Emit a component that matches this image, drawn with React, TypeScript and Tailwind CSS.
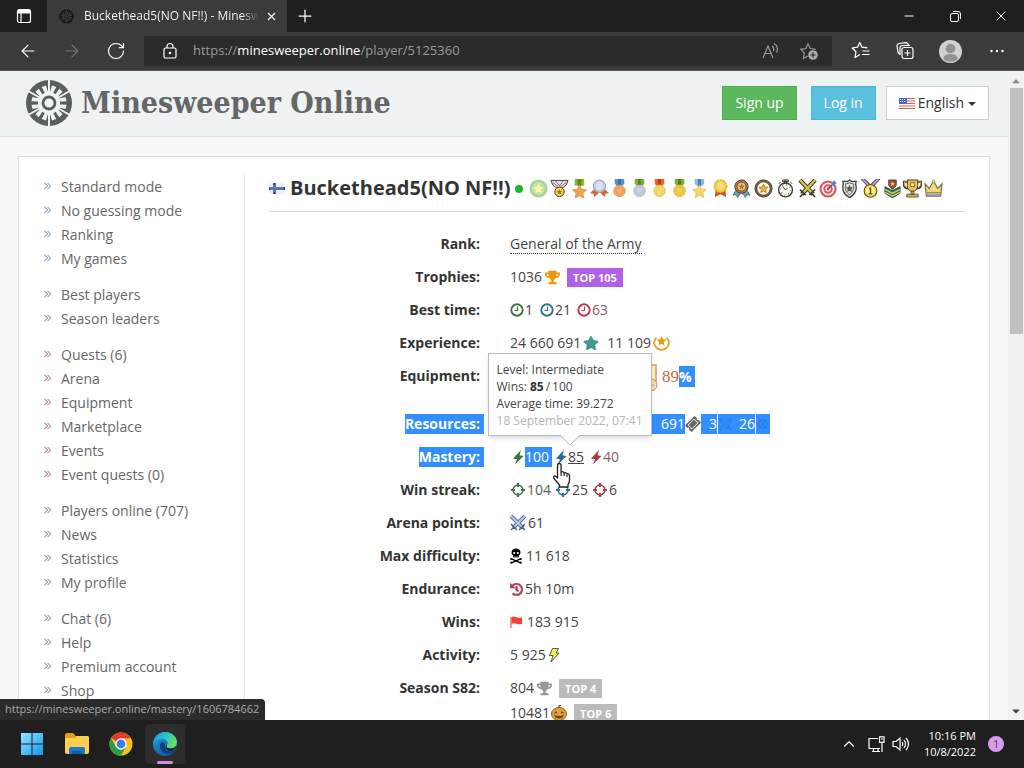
import type { ReactNode } from "react";
import { ArrowLeft, ArrowRight, RotateCw, Plus, X, Minus, ChevronUp, Swords } from "lucide-react";
import { FaTrophy, FaStar, FaHistory, FaTicketAlt, FaCaretDown, FaCaretUp } from "react-icons/fa";

const STAR = "M10 3l2.1 4.6 5 .6-3.7 3.4 1 5L10 14.1l-4.4 2.5 1-5L2.9 8.2l5-.6z";

function Logo({ size, color, hole }: { size: number; color: string; hole: string }) {
  const angles = [0, 60, 120, 180, 240, 300];
  return (
    <svg width={size} height={size} viewBox="-24 -24 48 48" aria-hidden="true">
      <circle r="23" fill={color} />
      <circle r="11.5" fill={hole} />
      {angles.map((a) => (
        <g key={a} transform={`rotate(${a})`}>
          <path d="M-1 -24h2v14h-2z" fill={hole} />
          <path d="M-2.200 -17.500h4.400v8h-4.400z" fill={hole} transform="rotate(17)" />
          <path d="M-2.200 -17.500h4.400v8h-4.400z" fill={hole} transform="rotate(43)" />
          <path d="M-1.500 -17h3v6h-3z" fill={color} transform="rotate(30)" />
        </g>
      ))}
      <circle r="6" fill="none" stroke={color} strokeWidth="2.800" />
    </svg>
  );
}

function Medal({ ribbon, dark, disc, rim }: { ribbon: string; dark: string; disc: string; rim: string }) {
  return (
    <>
      <path d="M5 0h10v5l-2 2H7L5 5z" fill={ribbon} />
      <path d="M8.5 0h3v6h-3z" fill={dark} />
      <circle cx="10" cy="12.5" r="6" fill={disc} stroke={rim} />
      <circle cx="10" cy="12.5" r="3.8" fill="none" stroke={rim} strokeWidth=".7" />
    </>
  );
}

const O = "#3f3830";
const awards: { name: string; cls: string; art: ReactNode }[] = [
  { name: "Veteran", cls: "w-[21px]", art: <><circle cx="10" cy="10" r="9.500" fill="#a9d3a0" /><circle cx="10" cy="10" r="6.800" fill="#c9e2a5" /><path d={STAR} fill="#fbf7b0" transform="translate(2.400 2.400) scale(.76)" /></> },
  { name: "Honour", cls: "w-[21px]", art: <><path d="M1 1.500h18l-2 5-4 3H7L3 6.500z" fill="#e8e8e8" stroke={O} /><path d="M3 3.500l6 5M17 3.500l-6 5M6 2l4 5 4-5" stroke="#7b5670" fill="none" /><circle cx="10" cy="13.500" r="5" fill="#f5cf52" stroke={O} /><path d={STAR} fill="#a06a20" transform="translate(6 9.500) scale(.4)" /></> },
  { name: "Bronze star", cls: "w-5", art: <><path d="M5 0h10v7H5z" fill="#8cb52e" /><path d="M8 0h4v7H8z" fill="#5c8913" /><path d={STAR} fill="#f0a154" stroke="#d98336" strokeWidth=".7" transform="translate(-.5 2.800) scale(1.050)" /></> },
  { name: "Silver rosette", cls: "w-5", art: <><path d="M5 10l-5 5 3.500 .500 1 3.500 5.500-5 5.500 5 1-3.500 3.500-.500-5-5z" fill="#df6538" /><circle cx="10" cy="7.500" r="6.500" fill="#c1cedd" stroke="#91a3b8" /><circle cx="10" cy="7.500" r="4" fill="#d9e3ed" /></> },
  { name: "Bronze medal", cls: "w-5", art: <Medal ribbon="#4f94cb" dark="#31719f" disc="#f2ad6b" rim="#df9048" /> },
  { name: "Silver medal", cls: "w-5", art: <Medal ribbon="#7dad2f" dark="#57851b" disc="#cbd3e4" rim="#a4b0c8" /> },
  { name: "Gold medal red", cls: "w-5", art: <Medal ribbon="#e76132" dark="#c03810" disc="#f8dc72" rim="#e8bd45" /> },
  { name: "Gold medal green", cls: "w-5", art: <Medal ribbon="#7dad2f" dark="#4f7d16" disc="#f5cd55" rim="#dfab35" /> },
  { name: "Gold star", cls: "w-5", art: <><path d="M5 0h10v5l-3 3H8L5 5z" fill="#8bb9de" /><path d="M8.500 0h3v7h-3z" fill="#3e7eb4" /><path d={STAR} fill="#f8d570" stroke="#dfae42" strokeWidth=".7" transform="translate(0 3)" /></> },
  { name: "Gold rosette", cls: "w-[21px]", art: <><path d="M5 11l-1 8 6-3 6 3-1-8z" fill="#d74b22" /><circle cx="10" cy="7.500" r="6.600" fill="#f4c942" stroke="#e8b52f" strokeWidth="1.500" strokeDasharray="2 1" /><circle cx="10" cy="7.500" r="4" fill="#fae17d" /></> },
  { name: "Ribbon", cls: "w-[22px]", art: <><path d="M4 12l-3 5 3-.500 2 3 4-6 4 6 2-3 3 .500-3-5z" fill="#67a2b5" stroke={O} strokeWidth=".6" /><circle cx="10" cy="8" r="7" fill="#b17c45" stroke={O} /><circle cx="10" cy="8" r="4.700" fill="#e8c26c" stroke={O} strokeWidth=".7" /><path d={STAR} fill="#b0752b" transform="translate(5.500 3.500) scale(.45)" /></> },
  { name: "Star badge", cls: "w-[22px]", art: <><circle cx="10" cy="10" r="9" fill="#8b6048" stroke={O} /><circle cx="10" cy="10" r="7" fill="#fff8e0" stroke={O} strokeWidth=".8" /><path d={STAR} fill="#f2b32d" stroke="#805619" transform="translate(3.500 3.500) scale(.65)" /></> },
  { name: "Stopwatch", cls: "w-[22px]", art: <><path d="M7 1h6v2H7zM9 2h2v3H9zM3 5l2-2M17 5l-2-2" fill="#d9cd72" stroke={O} /><circle cx="10" cy="11.500" r="7.300" fill="#f4f4e8" stroke={O} strokeWidth="1.400" /><circle cx="10" cy="11.500" r="5.300" fill="none" stroke="#777" strokeWidth="1.300" strokeDasharray="1 3.160" /><path d="M7 8l3 3.500 2-2" stroke={O} fill="none" /></> },
  { name: "Swords", cls: "w-[21px]", art: <><path d="M2 1l14 15M18 1L4 16" stroke={O} strokeWidth="4.500" /><path d="M2 1l14 15M18 1L4 16" stroke="#d5c940" strokeWidth="2.500" /><path d="M2 11l6 6M18 11l-6 6M2 19l4-4M18 19l-4-4" stroke={O} strokeWidth="1.700" /></> },
  { name: "Target", cls: "w-[21px]", art: <><circle cx="9.500" cy="10.500" r="9" fill="#df5258" /><circle cx="9.500" cy="10.500" r="6.800" fill="#fff0ec" /><circle cx="9.500" cy="10.500" r="4.900" fill="#df5258" /><circle cx="9.500" cy="10.500" r="2.900" fill="#fff0ec" /><circle cx="9.500" cy="10.500" r="1.500" fill="#c6413c" /><path d="M10 10l7-7" stroke="#365d91" strokeWidth="1.500" /><path d="M13 5l3-4 .700 2.500L19 4l-4 3.500z" fill="#4b88c7" /></> },
  { name: "Shield", cls: "w-[21px]", art: <><path d="M10 1l2 1.500h5l-.500 3c1.500 5 0 11-6.500 14C3.500 16.500 2 10.500 3.500 5.500L3 2.500h5z" fill="#e2e3df" stroke={O} strokeWidth="1.300" /><path d="M10 4c-2 1-4 1-4 1-1 5 0 9 4 11.500C14 14 15 10 14 5c0 0-2 0-4-1z" fill="none" stroke={O} strokeWidth=".8" /><path d={STAR} fill="#555" transform="translate(4.500 4.500) scale(.55)" /></> },
  { name: "First place", cls: "w-[22px]", art: <><path d="M0 0h4l6 6 6-6h4l-7 8H7z" fill="#8b6fa1" stroke="#5c3b43" strokeWidth=".8" /><path d="M2 0l6 7M18 0l-6 7" stroke="#e0d7df" /><circle cx="10" cy="12.500" r="6.700" fill="#efd842" stroke="#5e5422" strokeWidth="1.200" /><circle cx="10" cy="12.500" r="4.700" fill="#fff39b" /><path d="M8.500 10.500l1.500-1v6M8 15.500h4" stroke="#65501c" strokeWidth="1.500" fill="none" /></> },
  { name: "Rank insignia", cls: "w-[21px]", art: <><path d="M2 8l8 4 8-4v7l-8 5-8-5z" fill="#2f7655" stroke="#24473a" strokeWidth=".8" /><path d="M2 11l8 4 8-4M2 14l8 4 8-4" stroke="#e0d46a" fill="none" strokeWidth="1.200" /><path d="M6 1h8v6l-4 4-4-4z" fill="#9c4f3c" stroke={O} strokeWidth=".8" /><path d={STAR} fill="#edc85c" transform="translate(6.500 1.500) scale(.35)" /></> },
  { name: "Cup", cls: "w-5", art: <><path d="M5 3H1v3c0 3 2 4 5 4M15 3h4v3c0 3-2 4-5 4" fill="none" stroke={O} strokeWidth="2.200" /><path d="M5 3H1.500v3c0 2 2 3 4 3M15 3h3.500v3c0 2-2 3-4 3" fill="none" stroke="#dfb342" /><path d="M4.500 1h11v6c0 4-2.500 6-5.500 6s-5.500-2-5.500-6z" fill="#edc253" stroke={O} /><path d="M8.500 13h3v3h-3zM4 16h12v3H4z" fill="#d9b54c" stroke={O} strokeWidth=".8" /><rect x="8" y="4" width="4" height="4" fill="#fff3a2" stroke="#8f6123" /></> },
  { name: "Crown", cls: "w-[22px]", art: <><path d="M1 5l4.500 5L10 2l4.500 8L19 5l-1.500 13h-15z" fill="#ecd877" stroke="#776d48" strokeWidth="1.200" /><path d="M3 14.500h14" stroke="#776d48" /><path d="M3 17h14" stroke="#9098c0" strokeWidth="2" /><circle cx="10" cy="2.500" r="1.500" fill="#fff2b0" stroke="#776d48" strokeWidth=".7" /></> },
];

const menu: { color: string; items: string[] }[] = [
  { color: "text-[#4a76a8]", items: ["Standard mode", "No guessing mode", "Ranking", "My games"] },
  { color: "text-[#666666]", items: ["Best players", "Season leaders"] },
  { color: "text-[#a05252]", items: ["Quests (6)", "Arena", "Equipment", "Marketplace", "Events", "Event quests (0)"] },
  { color: "text-[#666666]", items: ["Players online (707)", "News", "Statistics", "My profile"] },
  { color: "text-[#666666]", items: ["Chat (6)", "Help", "Premium account", "Shop"] },
];

function Clock({ color }: { color: string }) {
  return (
    <svg width="14" height="14" viewBox="0 0 14 14" fill="none" stroke={color} aria-hidden="true">
      <circle cx="7" cy="7" r="5.700" strokeWidth="1.900" />
      <path d="M7.500 3.500V7.500H4.500" strokeWidth="1.200" />
    </svg>
  );
}

function Bolt({ className }: { className: string }) {
  return (
    <svg className={className} width="12" height="16" viewBox="0 0 12 16" aria-hidden="true">
      <path d="M9 1L1 9.500l4 .800L3 15.500l8.500-8.500-4-.800z" />
    </svg>
  );
}

function Crosshair({ color }: { color: string }) {
  return (
    <svg width="16" height="16" viewBox="0 0 16 16" fill="none" stroke={color} aria-hidden="true">
      <circle cx="8" cy="8" r="5" strokeWidth="1.500" />
      <path d="M8 1v4M8 11v4M1 8h4M11 8h4" strokeWidth="2.200" />
    </svg>
  );
}

function Skull() {
  return (
    <svg className="mr-1" width="12" height="16" viewBox="0 0 12 16" aria-hidden="true">
      <path d="M6 .5c3 0 4.500 1.800 4.500 4 0 1.500-.8 2.300-1.700 3v2H3.200v-2c-.9-.7-1.700-1.500-1.700-3 0-2.200 1.500-4 4.500-4z" />
      <circle cx="4.200" cy="5" r="1.100" fill="#fff" /><circle cx="7.800" cy="5" r="1.100" fill="#fff" />
      <path d="M5 8v1.500M7 8v1.500" stroke="#fff" strokeWidth=".6" />
      <path d="M1.500 10.800l9 4M10.500 10.800l-9 4" stroke="#000" strokeWidth="1.300" />
      <circle cx="1.300" cy="11" r="1.100" /><circle cx="10.700" cy="11" r="1.100" /><circle cx="1.300" cy="14.700" r="1.100" /><circle cx="10.700" cy="14.700" r="1.100" />
    </svg>
  );
}

function Row({ label, children, selected, tall }: { label: string; children: ReactNode; selected?: boolean; tall?: boolean }) {
  return (
    <div className={tall ? "flex h-12 items-start" : "flex h-[33px] items-start"}>
      <dt className="flex w-[215px] shrink-0 justify-end font-bold">
        <span className={selected ? "bg-[#338fff] pr-1 leading-5 text-white" : "pr-1 leading-5"}>{label}</span>
      </dt>
      <dd className="ml-[26px] flex h-5 items-center whitespace-nowrap leading-5 text-[#444]">{children}</dd>
    </div>
  );
}

function Flag({ className }: { className: string }) {
  return (
    <svg className={className} viewBox="0 0 16 11" aria-hidden="true">
      <path fill="#fff" d="M0 0h16v11H0z" />
      <path stroke="#dd5a58" d="M0 .5h16M0 3h16M0 5.500h16M0 8h16M0 10.500h16" />
      <path fill="#4967bd" d="M0 0h8v6H0z" />
      <path stroke="#dbe3ff" strokeDasharray="1 1" d="M1 1.500h6M1 3.500h6" />
    </svg>
  );
}

function Browser() {
  return (
    <header className="shrink-0 bg-[#1f1f1f] text-white">
      <div className="flex h-8 items-center">
        <button aria-label="Tab actions" className="flex h-8 w-[47px] items-center justify-center">
          <svg width="16" height="16" viewBox="0 0 16 16" fill="none" stroke="#fff" strokeWidth="1.200">
            <rect x="1.500" y="1.500" width="13" height="13" rx="2" />
            <path d="M2 3h12M2 4.500h12" strokeWidth="1.800" /><path d="M5 5v9" />
          </svg>
        </button>
        <div className="flex h-8 w-[240px] items-center bg-[#3b3b3b] pl-3 pr-2">
          <Logo size={15} color="#151515" hole="#3b3b3b" />
          <span className="ml-[10px] flex-1 overflow-hidden whitespace-nowrap bg-gradient-to-r from-white from-90% to-[#3b3b3b] bg-clip-text text-[12px] text-transparent">Buckethead5(NO NF!!) - Minesweeper</span>
          <button aria-label="Close tab" className="ml-1 flex size-4 items-center justify-center"><X size={13} strokeWidth={2} /></button>
        </div>
        <button aria-label="New tab" className="ml-2 flex size-5 items-center justify-center"><Plus size={20} strokeWidth={1.500} /></button>
        <div className="ml-auto flex">
          <button aria-label="Minimize" className="flex h-8 w-[46px] items-center justify-center"><Minus size={14} strokeWidth={1.700} /></button>
          <button aria-label="Restore" className="flex h-8 w-[46px] items-center justify-center">
            <svg width="11" height="11" viewBox="0 0 11 11" fill="none" stroke="#fff"><rect x=".5" y="2.500" width="8" height="8" rx="1.500" /><path d="M3 .5h5a2.500 2.500 0 012.500 2.500v5" /></svg>
          </button>
          <button aria-label="Close" className="flex h-8 w-[46px] items-center justify-center"><X size={16} strokeWidth={1.500} /></button>
        </div>
      </div>
      <div className="flex h-[39px] items-center border-b border-[#555] bg-[#3b3b3b]">
        <button aria-label="Back" className="ml-[18px]"><ArrowLeft size={20} strokeWidth={1.400} /></button>
        <button aria-label="Forward" className="ml-6 text-[#777]"><ArrowRight size={20} strokeWidth={1.400} /></button>
        <button aria-label="Refresh" className="ml-6"><RotateCw size={20} strokeWidth={1.400} /></button>
        <div className="ml-[18px] flex h-[30px] flex-1 items-center bg-[#2b2b2b] pl-[18px] pr-[14px]">
          <svg width="16" height="18" viewBox="0 0 16 18" fill="none" stroke="#fff" strokeWidth="1.200" aria-hidden="true">
            <rect x="2" y="6" width="12" height="10" rx="1.500" /><path d="M5 6V4.500a3 3 0 016 0V6" /><circle cx="8" cy="11" r=".7" fill="#fff" />
          </svg>
          <span className="ml-[15px] text-[13px] text-[#9a9a9a]">https://<span className="text-white">minesweeper.online</span>/player/5125360</span>
          <div className="ml-auto flex items-center gap-5">
            <button aria-label="Read aloud">
              <svg width="18" height="18" viewBox="0 0 18 18" fill="none" stroke="#999" strokeWidth="1.200"><path d="M1 16L6 4l5 12M3 11.500h6M10 4c1.500 1 2 3 1.500 5M12 1.500c3.500 2 4 5.500 2.500 9" /></svg>
            </button>
            <button aria-label="Add to favourites">
              <svg width="18" height="18" viewBox="0 0 18 18" fill="none" stroke="#999" strokeWidth="1.200"><path d="M8 14l-4.500 2.500.800-5.500L.8 7.300l5-.800L8 2l2.300 4.500 5.200.8" /><circle cx="13" cy="13" r="4.800" fill="#aaa" stroke="none" /><path d="M10.500 13h5M13 10.500v5" stroke="#292929" /></svg>
            </button>
          </div>
        </div>
        <div className="flex items-center pl-[19px] pr-5">
          <button aria-label="Favourites"><svg width="20" height="20" viewBox="0 0 20 20" fill="none" stroke="#fff" strokeWidth="1.200" strokeLinejoin="round"><path d="M9 13.500L4 16.500l1-5.800L1.200 7l5.300-.8L8.800 1.500 11 6.200l5.500.6M11.500 10h7M11 13.500h7.500" /></svg></button>
          <button aria-label="Collections" className="ml-6"><svg width="20" height="20" viewBox="0 0 20 20" fill="none" stroke="#fff" strokeWidth="1.200"><rect x="7" y="6.500" width="11" height="11" rx="2" /><path d="M12.500 9v6M9.500 12h6M5 13.500L3 11.500 2 5q0-2 2-2.500l7-.800q2 0 2.500 2.300M5 14V7q0-2.500 2.500-2.500H15" /></svg></button>
          <button aria-label="Profile" className="ml-6"><svg width="23" height="23" viewBox="0 0 24 24"><circle cx="12" cy="12" r="12" fill="#d3d1cf" /><circle cx="12" cy="9" r="5" fill="#96928f" /><path d="M4.500 20q0-5.500 7.500-5.500t7.500 5.500A12 12 0 014.500 20z" fill="#96928f" /></svg></button>
          <button aria-label="Settings and more" className="ml-7"><svg width="14" height="4" viewBox="0 0 14 4" fill="#fff"><circle cx="1.500" cy="2" r="1.200" /><circle cx="7" cy="2" r="1.200" /><circle cx="12.500" cy="2" r="1.200" /></svg></button>
        </div>
      </div>
    </header>
  );
}

function Tooltip() {
  return (
    <div role="tooltip" className="absolute bottom-[31px] left-1/2 z-10 h-[83px] w-[164px] -translate-x-1/2 border border-[#bbb] bg-white px-2 py-[7px] text-[12px] leading-[17px] text-[#444] shadow-md">
      <div>Level: Intermediate</div>
      <div>Wins: <b className="text-[#333]">85</b>&thinsp;/&thinsp;100</div>
      <div>Average time: 39.272</div>
      <div className="text-[#b5b5b5]">18 September 2022, 07:41</div>
      <svg className="absolute left-[71px] top-full" width="20" height="11" viewBox="0 0 20 11" aria-hidden="true"><path d="M0 0l10 10L20 0" fill="#fff" stroke="#bbb" /><path d="M1 0h18" stroke="#fff" strokeWidth="2" /></svg>
    </div>
  );
}

function Cursor() {
  return (
    <svg className="absolute -left-1 top-[14px] z-20" width="22" height="28" viewBox="0 0 22 28" aria-hidden="true">
      <path d="M6.500 16V4.500q0-2 1.800-2t1.800 2V11q2-1 3 .800 2-.8 2.800 1 2.100-.5 2.600 1.700v5q0 2-1.500 4v2.500H8.500V24L3 17.500q-1-1.800.5-2.500 1-.3 3 2z" fill="#fff" stroke="#222" strokeWidth="1.300" strokeLinejoin="round" />
      <path d="M10.100 11v4M13.100 12v3M16 13.500v2.500" stroke="#222" strokeWidth="1.200" />
    </svg>
  );
}

const badge = "px-[6px] text-[11px] leading-[19px] font-bold text-white";

function Profile() {
  return (
    <section className="min-w-0 flex-1 px-6">
      <div className="flex h-9 items-start border-b border-[#ddd]">
        <h1 className="flex h-6 shrink-0 items-center whitespace-nowrap text-[20px] font-bold">
          <svg className="mr-[5px]" width="16" height="11" viewBox="0 0 16 11" aria-label="Finland"><path d="M0 0h16v11H0z" fill="#edf0f7" /><path d="M0 5.500h16M5.500 0v11" stroke="#5c73c4" strokeWidth="3" /><path d="M0 4v3M5.500 0v2M5.500 9v2M15.500 4v3" stroke="#252c4d" /></svg>
          Buckethead5(NO NF!!)
        </h1>
        <span className="ml-1 mr-[5px] mt-[9px] size-2 shrink-0 rounded-full bg-[#1fb52a]" title="Online" />
        <ul className="flex h-6 shrink-0 items-center">
          {awards.map((a) => (
            <li key={a.name} className={`${a.cls} flex shrink-0 justify-center`}>
              <svg width="19" height="19" viewBox="0 0 20 20" role="img" aria-label={a.name}>{a.art}</svg>
            </li>
          ))}
        </ul>
      </div>
      <dl className="mt-[22px]">
        <Row label="Rank:"><a href="#rank" className="border-b border-dotted border-[#333] leading-[18px]">General of the Army</a></Row>
        <Row label="Trophies:">1036<FaTrophy size={15} className="ml-[3px] mr-[7px] text-[#ed980b]" /><span className={`${badge} bg-[#b160e8]`}>TOP 105</span></Row>
        <Row label="Best time:">
          <Clock color="#3c763d" /><span className="ml-[1px] mr-[7px]">1</span>
          <Clock color="#31708f" /><span className="ml-[1px] mr-[6px]">21</span>
          <Clock color="#b24052" /><span className="ml-[1px] text-[#855c64]">63</span>
        </Row>
        <Row label="Experience:">
          24 660 691<FaStar size={16} className="ml-[2px] mr-2 text-[#46978c]" />11 109
          <svg className="ml-[2px]" width="17" height="17" viewBox="0 0 20 20" aria-hidden="true"><path d="M4 3q-6 7 1 13M16 3q6 7-1 13M5 16q5 3 10 0" fill="none" stroke="#dfa52f" strokeWidth="2.200" /><path d={STAR} fill="#e6990d" transform="translate(2 -1) scale(.8)" /></svg>
        </Row>
        <Row label="Equipment:" tall>
          <svg className="ml-[134px] mt-[6px] h-[30px] w-[15px] shrink-0" viewBox="0 0 15 30" aria-hidden="true"><path d="M4 1h8v16H4z" fill="#fff0d8" stroke="#df9c54" strokeWidth="1.500" /><circle cx="7" cy="21" r="6" fill="#f8dcb5" stroke="#ce8855" /><path d="M7 18v6M4 21h6" stroke="#d49551" /></svg>
          <span className="ml-[3px] mt-[2px] font-['Liberation_Serif',serif] text-[17px] text-[#ca6736]">89</span>
          <span className="bg-[#338fff] pr-[3px] font-bold leading-[21px] text-white">%</span>
        </Row>
        <Row label="Resources:" selected>
          <span className="ml-[138px] bg-[#338fff] pl-[13px] leading-5 text-white">691</span>
          <FaTicketAlt size={14} className="mx-[1px] -rotate-45 text-[#666]" />
          <span className="bg-[#338fff] pl-2 leading-5 text-white">3</span>
          <span className="ml-[1px] flex h-5 items-center bg-[#338fff] text-white">
            <Swords size={15} className="text-[#2b80e6]" /><span className="ml-[6px]">26</span>
          </span>
          <span className="ml-[1px] flex h-5 w-[14px] items-center justify-center bg-[#338fff]"><svg width="12" height="12" viewBox="0 0 12 12" fill="none" stroke="#2b80e6" strokeWidth="1.500" aria-hidden="true"><circle cx="6" cy="6" r="4" /><path d="M2 2l8 8M10 2l-8 8" /></svg></span>
        </Row>
        <Row label="Mastery:" selected>
          <Bolt className="ml-[2px] mr-[1px] fill-[#3c763d]" />
          <span className="bg-[#338fff] pr-[3px] leading-5 text-white">100</span>
          <a href="#mastery" className="relative ml-[3px] flex h-5 items-center">
            <Bolt className="mr-[1px] fill-[#256c8e]" /><span className="underline">85</span>
            <Tooltip />
            <Cursor />
          </a>
          <Bolt className="ml-[6px] mr-[1px] fill-[#ad373c]" /><span className="text-[#855c64]">40</span>
        </Row>
        <Row label="Win streak:">
          <Crosshair color="#48764a" /><span className="ml-[1px] mr-1 text-[#536253]">104</span>
          <Crosshair color="#31708f" /><span className="ml-[1px] mr-1">25</span>
          <Crosshair color="#a94442" /><span className="ml-[1px]">6</span>
        </Row>
        <Row label="Arena points:">
          <svg className="mr-[2px]" width="16" height="16" viewBox="0 0 16 16" aria-hidden="true"><path d="M1 1l12 12M15 1L3 13" stroke="#57709d" strokeWidth="4" /><path d="M1 1l12 12M15 1L3 13" stroke="#b4cae6" strokeWidth="1.800" /><path d="M1 9l6 6M15 9l-6 6M1 15l3-3M15 15l-3-3" stroke="#4c668c" strokeWidth="1.500" /></svg>61
        </Row>
        <Row label="Max difficulty:"><Skull />11 618</Row>
        <Row label="Endurance:"><FaHistory size={13} className="mr-[2px] fill-[#b13a50] stroke-[#b13a50] stroke-[24px]" />5h 10m</Row>
        <Row label="Wins:"><svg className="mr-1 mb-[1px]" width="13" height="12" viewBox="0 0 13 12" aria-hidden="true"><path d="M1 1v11" stroke="#c74840" /><path d="M1.500 1q2.500-1 5 .300t5.500 0v6.500q-3 1-5.500 0t-5 0z" fill="#f44336" /></svg>183 915</Row>
        <Row label="Activity:">5 925<svg className="ml-[2px]" width="12" height="16" viewBox="0 0 12 16" aria-hidden="true"><path d="M4.500 1.500h6L8 6h3L3 15l2-6.500H1.500z" fill="#f7ed4f" stroke="#555" /></svg></Row>
        <div className="flex">
          <dt className="w-[211px] text-right font-bold leading-5">Season S82:</dt>
          <dd className="ml-[30px] flex flex-col gap-[5px] leading-5 text-[#444]">
            <span className="flex h-5 items-center">804<FaTrophy size={15} className="ml-[3px] mr-[7px] text-[#999]" /><span className={`${badge} bg-[#bbb]`}>TOP 4</span></span>
            <span className="flex h-5 items-center">10481
              <svg className="ml-[1px] mr-[7px]" width="16" height="16" viewBox="0 0 16 16" aria-hidden="true"><ellipse cx="8" cy="9" rx="7.500" ry="6.500" fill="#e8a337" stroke="#7d5f2b" /><path d="M5 3q-3 6 0 12M11 3q3 6 0 12" stroke="#cb862a" fill="none" /><path d="M8 3V1l2-1" stroke="#64752d" strokeWidth="1.500" fill="none" /><path d="M3 7.500l3-1v2zM13 7.500l-3-1v2zM3 10q5 2 10 0-2 3.500-5 3.500T3 10z" fill="#65451d" /></svg>
              <span className={`${badge} bg-[#bbb]`}>TOP 6</span>
            </span>
          </dd>
        </div>
      </dl>
    </section>
  );
}

function Taskbar() {
  return (
    <footer className="flex h-12 shrink-0 items-center bg-[#1f1f1f] text-white">
      <button aria-label="Start" className="ml-5"><svg width="24" height="24" viewBox="0 0 24 24"><defs><linearGradient id="win" x2="1" y2="1"><stop stopColor="#8be9ff" /><stop offset="1" stopColor="#1697ed" /></linearGradient></defs><path fill="url(#win)" d="M1 1h10.500v10.500H1zM12.500 1H23v10.500H12.500zM1 12.500h10.500V23H1zM12.500 12.500H23V23H12.500z" /></svg></button>
      <button aria-label="File Explorer" className="ml-5"><svg width="26" height="24" viewBox="0 0 26 24"><path d="M1 3q0-2 2-2h6l3 3h11q2 0 2 2v14H1z" fill="#dda11b" /><path d="M1 6h10l2-2h10q2 0 2 2v14q0 2-2 2H3q-2 0-2-2z" fill="#fdd04f" /><path d="M5 22v-5q0-2 2-2h12q2 0 2 2v5z" fill="#1c78ca" /><path d="M8 19h10v3H8z" fill="#125b9e" /></svg></button>
      <button aria-label="Chrome" className="ml-[19px]"><svg width="24" height="24" viewBox="-12 -12 24 24"><circle r="11.500" fill="#fbc116" /><path d="M-9.960-5.750A11.500 11.500 0 019.960-5.750H0L-5-2.900z" fill="#e33b2e" /><path d="M-9.960-5.750A11.500 11.500 0 000 11.500L5 2.900 0 5.500-5 2.900z" fill="#2b9e4b" /><circle r="5.700" fill="#fff" /><circle r="4.400" fill="#3d7fe8" /></svg></button>
      <button aria-label="Edge" className="relative ml-3 flex size-10 items-center justify-center rounded bg-[#2d2d2d]">
        <svg width="24" height="24" viewBox="0 0 24 24"><defs><linearGradient id="edgeTop" x2="1" y2=".4"><stop stopColor="#1997dc" /><stop offset=".6" stopColor="#2fc5c8" /><stop offset="1" stopColor="#69df59" /></linearGradient><linearGradient id="edgeLow" x2=".8" y2="1"><stop stopColor="#24a7df" /><stop offset="1" stopColor="#114a96" /></linearGradient></defs><circle cx="12" cy="12" r="12" fill="url(#edgeLow)" /><path d="M0 12C1 5 6 0 12 0c7 0 12 5 12 10 0 4-3 6.500-6 6.500-4 0-5-1.500-4-3 2-4-1-6.500-5-6.500-5 0-8 3-9 5z" fill="url(#edgeTop)" /><path d="M8.500 10c-4 5 0 12 7 11.500 3 0 5.500-1.500 7-3.500-6 3-11 1-10.500-4.500q.5-3-3.500-3.500z" fill="#123f7c" /><path d="M14 13.500q-2 3 4 3 3 0 5-2.500-1 3-3.500 4.500-7 1-7-4z" fill="#1f1f1f" /></svg>
        <span className="absolute bottom-0 h-[3px] w-4 rounded-full bg-[#d48be8]" />
      </button>
      <div className="ml-auto flex items-center pr-5">
        <button aria-label="Hidden icons"><ChevronUp size={18} strokeWidth={1.500} /></button>
        <svg className="ml-[10px]" width="17" height="17" viewBox="0 0 17 17" fill="none" stroke="#fff" strokeWidth="1.200" aria-label="Network"><path d="M10 2.500H1v10h11M4 15.500h8M5.500 13v2.500M10 13v2.500M14 7v9" /><rect x="11.500" y=".8" width="4.500" height="5.500" /><path d="M13 3h2" /></svg>
        <svg className="ml-[7px]" width="18" height="16" viewBox="0 0 18 16" fill="none" stroke="#fff" strokeWidth="1.200" aria-label="Volume"><path d="M1 5.500h3L8 2v12l-4-3.500H1zM10 6q1.500 2 0 4M12 4q3 4 0 8M14 2q5 6 0 12" /></svg>
        <div className="ml-[14px] text-right text-[11px] leading-4"><div>10:16 PM</div><div>10/8/2022</div></div>
        <span className="ml-3 flex size-4 items-center justify-center rounded-full bg-[#d99be6] text-[10px] text-[#333]">1</span>
      </div>
    </footer>
  );
}

export default function App() {
  return (
    <div className="flex h-screen flex-col overflow-hidden font-['Open_Sans',sans-serif] text-[14px] text-[#333]">
      <Browser />
      <div className="relative flex min-h-0 flex-1 bg-[#f8f8f8]">
        <main className="min-w-0 flex-1 overflow-hidden">
          <div className="flex h-[66px] items-center border-b border-[#e0e0e0] bg-[#eef2f3] pb-[2px] pl-[25px] pr-[19px]">
            <a href="#home" className="flex items-center gap-2 whitespace-nowrap font-['DejaVu_Serif_Condensed','DejaVu_Serif',serif] text-[30px] font-bold text-[#666]">
              <Logo size={48} color="#595e60" hole="#eef2f3" />
              Minesweeper Online
            </a>
            <div className="ml-auto flex items-center">
              <button className="h-[34px] border border-[#4cae4c] bg-[#5cb85c] px-3 text-white">Sign up</button>
              <button className="ml-[14px] h-[34px] border border-[#46b8da] bg-[#5bc0de] px-3 text-white">Log in</button>
              <button className="ml-[10px] flex h-[34px] items-center border border-[#ccc] bg-white px-3"><Flag className="mr-[3px] mt-[2px] h-[11px] w-4" />English<svg className="ml-1 mt-[2px]" width="8" height="4" viewBox="0 0 8 4" aria-hidden="true"><path d="M0 0h8L4 4z" fill="#333" /></svg></button>
            </div>
          </div>
          <div className="mx-[18px] mt-[19px] flex border border-[#ddd] bg-white pt-[19px]">
            <nav className="-mt-[2px] w-[226px] shrink-0 border-r border-[#e8e8e8] pl-6">
              {menu.map((group) => (
                <ul key={group.items[0]} className="mb-3">
                  {group.items.map((item) => (
                    <li key={item} className="h-6">
                      <a href="#menu" className="flex h-6 items-center text-[#666]">
                        <svg className={`${group.color} ml-[1px] mr-[10px]`} width="7" height="8" viewBox="0 0 8 8" fill="none" stroke="currentColor" strokeWidth="1.100" aria-hidden="true"><path d="M.5 .5L4 4 .5 7.500M4 .5L7.500 4 4 7.500" /></svg>
                        {item}
                      </a>
                    </li>
                  ))}
                </ul>
              ))}
            </nav>
            <Profile />
          </div>
        </main>
        <div className="flex w-4 shrink-0 flex-col items-center bg-[#f1f1f1]">
          <FaCaretUp size={12} className="mt-1 text-[#888]" />
          <div className="mt-[1px] h-[246px] w-[13px] bg-[#c1c1c1]" />
          <FaCaretDown size={12} className="mb-[3px] mt-auto text-[#444]" />
        </div>
        <div className="absolute bottom-0 left-0 z-30 flex h-[21px] items-center rounded-tr bg-[#2b2b2b] pl-[5px] pr-[6px] text-[11px] text-[#aaa]">https://minesweeper.online/mastery/1606784662</div>
      </div>
      <Taskbar />
    </div>
  );
}
